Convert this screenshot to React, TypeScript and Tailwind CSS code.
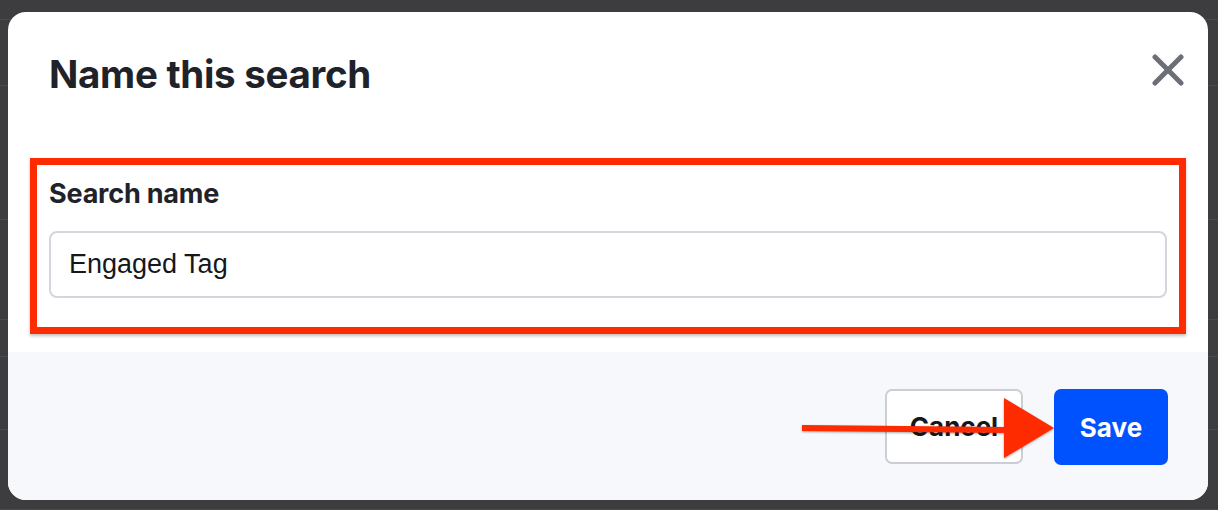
import React from "react";

const bgRows = [20, 66, 134, 100, 37, 73, 80];

function CloseIcon() {
  return (
    <svg width="32" height="32" viewBox="0 0 32 32" fill="none">
      <path d="M3 3L29 29M29 3L3 29" stroke="#6c6f77" strokeWidth="5" strokeLinecap="round" />
    </svg>
  );
}

function Arrow() {
  return (
    <svg width="260" height="64" viewBox="0 0 260 64" className="drop-shadow-[0_1px_1px_rgba(0,0,0,0.35)]">
      <path d="M2 27L206 29L206 35L2 33Z" fill="#fe2a00" />
      <path d="M204 0L254 30L204 60Z" fill="#fe2a00" />
    </svg>
  );
}

export default function App() {
  return (
    <div className="relative h-[510px] w-[1218px] overflow-hidden bg-[#3d3d3f] font-['Inter',sans-serif]">
      {/* dimmed page behind */}
      <div className="flex flex-col">
        {bgRows.map((h, i) => (
          <div key={i} className="border-b border-[#4a4a4c]" style={{ height: h }} />
        ))}
      </div>

      {/* modal */}
      <div className="absolute left-[8px] top-[12px] flex h-[488px] w-[1200px] flex-col overflow-hidden rounded-[18px] bg-white">
        <div className="flex items-start justify-between pl-[41px] pr-[24px] pt-[38px]">
          <h2 className="text-[38.5px] font-bold leading-[48px] tracking-[-0.3px] text-[#1f2229]">Name this search</h2>
          <div className="mt-[4px]">
            <CloseIcon />
          </div>
        </div>

        <div className="px-[22px] pt-[60px] pb-[18px]">
          <div className="border-[7px] border-[#fe2a00] px-[12px] pt-[12px] pb-[29px] shadow-[0_2px_3px_rgba(0,0,0,0.25)]">
            <div className="text-[27px] font-bold leading-[34px] tracking-[-0.2px] text-[#1f2229]">Search name</div>
            <div className="mt-[20px] flex h-[67px] items-center rounded-[8px] border-2 border-[#d3d6dc] px-[18px]">
              <span className="font-['Liberation_Sans',sans-serif] text-[27px] text-[#15171c]">Engaged Tag</span>
            </div>
          </div>
        </div>

        <div className="relative flex flex-1 items-start justify-end gap-[31px] bg-[#f7f8fc] pr-[40px] pt-[37px]">
          <button className="h-[75px] w-[138px] rounded-[7px] border-2 border-[#cbced5] bg-white text-[26px] font-bold text-[#15171c]">
            Cancel
          </button>
          <button className="h-[76px] w-[114px] rounded-[7px] bg-[#0052ff] text-[26px] font-bold text-white">
            Save
          </button>
          <div className="absolute left-[792px] top-[46px]">
            <Arrow />
          </div>
        </div>
      </div>
    </div>
  );
}
